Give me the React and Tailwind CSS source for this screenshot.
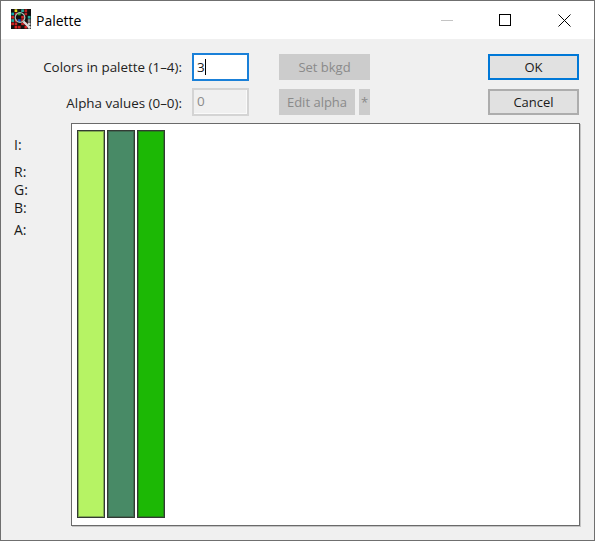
const font = { fontFamily: '"Open Sans", "Noto Sans", sans-serif' };

const ICON = [
  '#111', '#e8e020', '#1a1a1a', '#2a9', '#b22', '#111',
  '#1aa', '#b22', '#3a3', '#111', '#b22', '#111',
  '#c22', '#111', '#111', '#c22', '#111', '#2a9',
  '#2a9', '#c22', '#15c', '#c22', '#111', '#888',
  '#c22', '#c22', '#111', '#c22', '#c22', '#ccc',
  '#111', '#d22', '#c22', '#111', '#d22', '#eee',
];

function AppIcon() {
  return (
    <svg width="20" height="20" viewBox="0 0 20 20" className="shrink-0 -mt-[2px]">
      <rect width="20" height="20" fill="#101010" />
      {ICON.map((c, i) => (
        <rect key={i} x={(i % 6) * 3.3 + 0.3} y={Math.floor(i / 6) * 3.3 + 0.3} width="2.7" height="2.7" fill={c} />
      ))}
      <circle cx="9" cy="8.5" r="4.8" fill="none" stroke="#9fc0b8" strokeWidth="1.3" />
      <path d="M12.5 12.5l6.5 6.5" stroke="#dcdcdc" strokeWidth="2.2" />
    </svg>
  );
}

function Swatch({ className }) {
  return <div className={`w-7 h-full border border-[#333a33] shadow-[inset_0_0_0_1px_rgba(50,60,50,0.4)] ${className}`} />;
}

function DisabledButton({ className, children }) {
  return (
    <div className={`h-[26px] pt-[2px] bg-[#cccccc] text-[#8a8a8a] flex items-center justify-center text-[13px] ${className}`}>
      {children}
    </div>
  );
}

export default function App() {
  return (
    <div style={font} className="w-[595px] h-[541px] border border-[#6f6f6f] bg-[#f0f0f0] flex flex-col text-[#1a1a1a] overflow-hidden">
      <div className="h-[38px] bg-white flex items-center pl-[10px] shrink-0">
        <AppIcon />
        <span className="ml-[5px] text-[14px] text-black">Palette</span>
        <div className="ml-auto flex items-center">
          <div className="w-[46px] flex justify-center"><svg width="12" height="12"><path d="M0 6.5h12" stroke="#c4c4c4" /></svg></div>
          <div className="w-[46px] flex justify-center ml-[12px]"><svg width="12" height="12"><rect x="0.5" y="0.5" width="11" height="11" fill="none" stroke="#000" /></svg></div>
          <div className="w-[46px] flex justify-center ml-[13px] mr-[7px]"><svg width="13" height="13"><path d="M0.5 0.5l12 12M12.5 0.5l-12 12" stroke="#000" /></svg></div>
        </div>
      </div>

      <div className="flex-1 flex flex-col">
        <div className="flex pt-[14px] h-[84px] shrink-0">
          <div className="w-[181px] flex flex-col items-end gap-[15px] pt-[4px] text-[13.4px]">
            <span className="leading-[21px] text-[#222]">Colors in palette (1–4):</span>
            <span className="leading-[21px] text-[#222]">Alpha values (0–0):</span>
          </div>
          <div className="ml-[10px] w-[57px] flex flex-col gap-[7px]">
            <div className="h-[28px] border-2 border-[#1a80d8] bg-white pl-[3px] text-[13.5px] leading-[24px]">
              3<span className="inline-block w-px h-[16px] bg-black align-[-3px]" />
            </div>
            <div className="h-[28px] border-2 border-[#d4d4d4] bg-[#f0f0f0] shadow-[inset_-1px_-1px_0_#fafafa] pl-[3px] text-[13.5px] leading-[22px] text-[#8c8c8c]">0</div>
          </div>
          <div className="ml-[30px] w-[92px] flex flex-col gap-[9px] pt-px">
            <DisabledButton className="w-[91px]">Set bkgd</DisabledButton>
            <div className="flex gap-[4px]">
              <DisabledButton className="w-[76px]">Edit alpha</DisabledButton>
              <DisabledButton className="w-[11px]">*</DisabledButton>
            </div>
          </div>
          <div className="ml-[117px] flex flex-col gap-[9px] pt-px">
            <div className="w-[91px] h-[26px] pt-px border-2 border-[#0078d7] bg-[#e1e1e1] flex items-center justify-center text-[13px]">OK</div>
            <div className="w-[91px] h-[26px] pt-px border-2 border-[#adadad] bg-[#e1e1e1] flex items-center justify-center text-[13px]">Cancel</div>
          </div>
        </div>

        <div className="flex h-[403px] shrink-0">
          <div className="w-[70px] pl-[13px] pt-[13px] text-[14px] flex flex-col">
            <span className="leading-[18px]">I:</span>
            <span className="leading-[18px] mt-[9px]">R:</span>
            <span className="leading-[18px]">G:</span>
            <span className="leading-[18px]">B:</span>
            <span className="leading-[18px] mt-[4px]">A:</span>
          </div>
          <div className="w-[509px] h-full bg-white border border-[#6a6a6a] shadow-[1px_1px_0_#c4c4c4] flex gap-[2px] pl-[5px] pt-[6px] pb-[7px] shrink-0">
            <Swatch className="bg-[#b6f364]" />
            <Swatch className="bg-[#488a66]" />
            <Swatch className="bg-[#1cb805]" />
          </div>
        </div>
      </div>
    </div>
  );
}
